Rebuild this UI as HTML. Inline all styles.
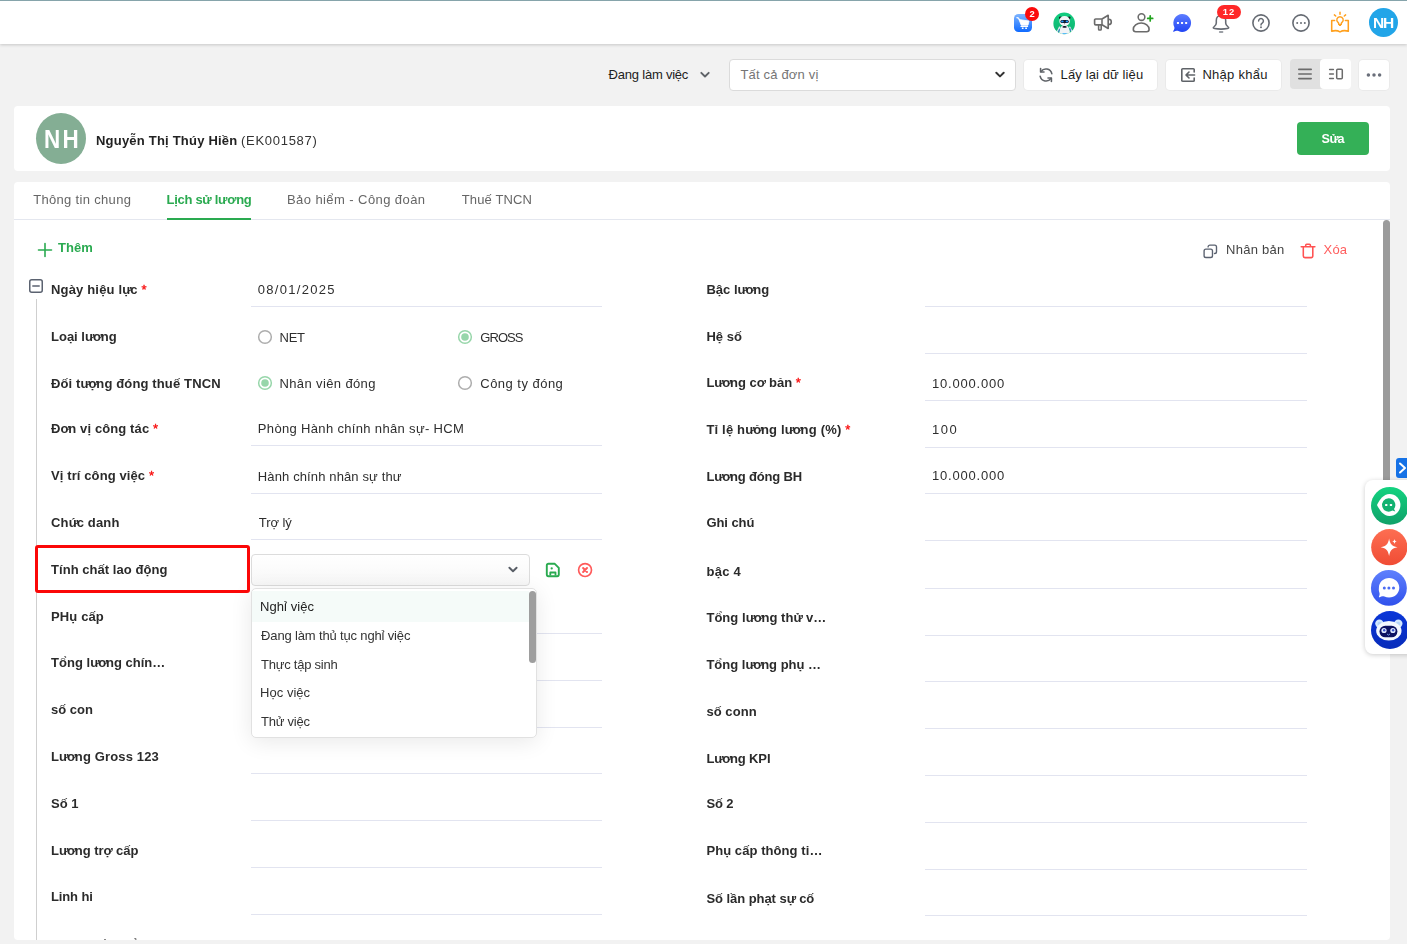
<!DOCTYPE html>
<html lang="vi">
<head>
<meta charset="utf-8">
<title>Hồ sơ nhân viên - Lịch sử lương</title>
<style>
*{box-sizing:border-box;margin:0;padding:0}
html,body{width:1407px;height:944px;overflow:hidden}
body{background:#f2f2f2;font-family:"Liberation Sans",sans-serif;font-size:13px;color:#333;position:relative}
.abs{position:absolute}
.t{position:absolute;white-space:nowrap;line-height:16px;font-size:13px}
.b{font-weight:bold}
.lbl{position:absolute;white-space:nowrap;line-height:16px;font-size:13px;font-weight:bold;color:#2b2b2b}
.val{position:absolute;white-space:nowrap;line-height:16px;font-size:13px;color:#2e2e2e;letter-spacing:.45px}
.ul{position:absolute;height:1px;background:#e2e4f0}
.req{color:#f80f0f;font-weight:normal;-webkit-text-stroke:.35px #f80f0f}
.h{letter-spacing:-1.45px}
.he{letter-spacing:-.5px}
#header{left:0;top:0;width:1407px;height:44px;background:#fff;border-top:1px solid #86a4ab;box-shadow:0 1px 3px rgba(0,0,0,.18)}
.card{position:absolute;background:#fff;border-radius:4px}
.btn{position:absolute;background:#fff;border-radius:4px;height:30.4px;top:59.9px;box-shadow:0 0 0 1px rgba(0,0,0,.03)}
.opt{position:absolute;left:9px;line-height:16px;font-size:13px;color:#333;white-space:nowrap}
svg{position:absolute;overflow:visible}
/* per-text metric fit */
#tb1{letter-spacing:-0.217px!important;margin-left:-0.4px}
#tb2{letter-spacing:0.183px!important;margin-left:-0.6px}
#tb3{letter-spacing:0.114px!important;margin-left:-0.4px}
#tb4{letter-spacing:0.274px!important;margin-left:-0.6px}
#nm{letter-spacing:0.21px!important;margin-left:-1px}
#code{letter-spacing:0.711px!important;margin-left:-1px}
#tab1{letter-spacing:0.321px!important;margin-left:1.2px}
#tab2{letter-spacing:-0.3px!important;margin-left:-0.4px}
#tab3{letter-spacing:0.418px!important;margin-left:0.0px}
#tab4{letter-spacing:0.126px!important;margin-left:0.8px}
#them{letter-spacing:0.067px!important;margin-left:0px}
#nhanban{letter-spacing:0.279px!important;margin-left:-1px}
#xoa{letter-spacing:0.15px!important;margin-left:-0.4px}
#v0{letter-spacing:1.294px!important;margin-left:-1.2px}
#v3{letter-spacing:0.336px!important;margin-left:-1.2px}
#v4{letter-spacing:0.126px!important;margin-left:-1.2px}
#v5{letter-spacing:-0.07px!important;margin-left:-0.2px}
#w2{letter-spacing:0.806px!important;margin-left:0.0px}
#w3{letter-spacing:1.55px!important;margin-left:0.0px}
#w4{letter-spacing:0.806px!important;margin-left:0.0px}
#r1{letter-spacing:-0.25px!important;margin-left:-1.0px}
#r2{letter-spacing:-0.95px!important;margin-left:-0.2px}
#r3{letter-spacing:0.373px!important;margin-left:-1.0px}
#r4{letter-spacing:0.469px!important;margin-left:-0.2px}
#ll0{letter-spacing:0.172px!important;margin-left:0px}
#ll1{letter-spacing:0.0px!important;margin-left:0px}
#ll2{letter-spacing:0.139px!important;margin-left:0px}
#ll3{letter-spacing:0.113px!important;margin-left:0px}
#ll4{letter-spacing:0.106px!important;margin-left:0px}
#ll5{letter-spacing:0.164px!important;margin-left:0px}
#ll6{letter-spacing:0.047px!important;margin-left:0px}
#ll7{letter-spacing:0.133px!important;margin-left:0px}
#ll8{letter-spacing:0.027px!important;margin-left:0px}
#ll10{letter-spacing:0.143px!important;margin-left:0px}
#ll11{letter-spacing:0.0px!important;margin-left:0px}
#ll12{letter-spacing:0.0px!important;margin-left:0px}
#ll13{letter-spacing:-0.133px!important;margin-left:0px}
#rl0{letter-spacing:0.025px!important;margin-left:0.4px}
#rl1{letter-spacing:0.05px!important;margin-left:0.4px}
#rl2{letter-spacing:-0.031px!important;margin-left:0.4px}
#rl3{letter-spacing:0.182px!important;margin-left:0.4px}
#rl4{letter-spacing:-0.15px!important;margin-left:0.4px}
#rl5{letter-spacing:-0.067px!important;margin-left:0.4px}
#rl6{letter-spacing:0.3px!important;margin-left:0.4px}
#rl7{letter-spacing:0.044px!important;margin-left:0.4px}
#rl8{letter-spacing:0.0px!important;margin-left:0.4px}
#rl9{letter-spacing:0.066px!important;margin-left:0.4px}
#rl10{letter-spacing:-0.125px!important;margin-left:0.4px}
#rl11{letter-spacing:-0.134px!important;margin-left:0.4px}
#rl12{letter-spacing:0.075px!important;margin-left:0.4px}
#rl13{letter-spacing:-0.05px!important;margin-left:0.4px}
#o1{letter-spacing:0.05px!important;margin-left:-0.9px}
#o2{letter-spacing:-0.156px!important;margin-left:0.1px}
#o3{letter-spacing:-0.242px!important;margin-left:0.1px}
#o4{letter-spacing:0.014px!important;margin-left:-0.9px}
#o5{letter-spacing:-0.243px!important;margin-left:0.1px}
</style>
</head>
<body>
<div id="root" style="position:absolute;left:0;top:0;width:1407px;height:944px;overflow:hidden">
<!-- HEADER -->
<div id="header" class="abs"></div>

<!-- TOOLBAR -->
<div id="tb1" class="t" style="left:609px;top:66.5px;color:#222">Đang làm việc</div>
<svg style="left:700px;top:71px" width="10" height="8" viewBox="0 0 10 8"><path d="M1.3 1.8 L5 5.5 L8.7 1.8" fill="none" stroke="#5f6368" stroke-width="1.9" stroke-linecap="round" stroke-linejoin="round"/></svg>
<div class="abs" style="left:729px;top:59px;width:287px;height:32px;background:#fff;border:1px solid #dbdbdb;border-radius:4px"></div>
<div id="tb2" class="t" style="left:741px;top:67px;color:#757575;letter-spacing:.55px">Tất cả đơn vị</div>
<svg style="left:995px;top:71px" width="10" height="8" viewBox="0 0 10 8"><path d="M1.3 1.8 L5 5.4 L8.7 1.8" fill="none" stroke="#333" stroke-width="2" stroke-linecap="round" stroke-linejoin="round"/></svg>

<div class="btn" style="left:1024.2px;width:133px"></div>
<div id="tb3" class="t" style="left:1061px;top:66.9px;color:#1c1c1c">Lấy lại dữ liệu</div>
<div class="btn" style="left:1166px;width:114.8px"></div>
<div id="tb4" class="t" style="left:1203px;top:66.9px;color:#1c1c1c">Nhập khẩu</div>
<div class="abs" style="left:1290px;top:59px;width:34px;height:30px;background:#e0e0e0;border-radius:4px 0 0 4px"></div>
<div class="abs" style="left:1320px;top:59px;width:31px;height:30px;background:#fff;border-radius:4px"></div>
<div class="btn" style="left:1359.3px;width:29.4px"></div>

<div id="cards" style="position:absolute;left:0;top:0;width:1407px;height:944px;will-change:transform">
<!-- EMPLOYEE CARD -->
<div class="card" style="left:14px;top:106px;width:1376px;height:65px"></div>
<div class="abs" style="left:36px;top:113px;width:50px;height:51px;border-radius:50%;background:#84ae94"></div>
<div id="avt" class="t b" style="left:44.1px;top:124.5px;font-size:25.5px;line-height:28px;color:#fff;letter-spacing:2.5px;transform:scaleX(.88);transform-origin:0 0">NH</div>
<div id="nm" class="t b" style="left:97px;top:133px;color:#222">Nguyễn Thị Thúy Hiền</div>
<div id="code" class="t" style="left:242px;top:133px;color:#333;letter-spacing:.6px">(EK001587)</div>
<div class="abs" style="left:1297px;top:122px;width:72px;height:33px;background:#34b057;border-radius:4px"></div>
<div id="sua" class="t b" style="left:1321.5px;top:130.5px;color:#fff;letter-spacing:-.3px;font-size:12.6px">S<span style="letter-spacing:-1.3px">ử</span>a</div>

<!-- MAIN CARD -->
<div id="main" class="card" style="left:14px;top:182px;width:1376px;height:758px;overflow:hidden"></div>
<div class="abs" style="left:14px;top:219px;width:1376px;height:1px;background:#e4e7ef"></div>
<div id="tab1" class="t" style="left:32px;top:192px;color:#666;letter-spacing:.45px">Thông tin chung</div>
<div id="tab2" class="t b" style="left:167px;top:192px;color:#2aaa50">Lịch sử lương</div>
<div class="abs" style="left:167px;top:218px;width:84px;height:2px;background:#2aaa50"></div>
<div id="tab3" class="t" style="left:287px;top:192px;color:#666;letter-spacing:.45px">Bảo hiểm - Công đoàn</div>
<div id="tab4" class="t" style="left:461px;top:192px;color:#666;letter-spacing:.45px">Thuế TNCN</div>

<!-- FORM -->
<div id="form" class="abs" style="left:14px;top:220px;width:1376px;height:720px;overflow:hidden;border-radius:0 0 4px 4px">
<div class="abs" style="left:22px;top:79px;width:1px;height:700px;background:#cfcfcf"></div>
<div id="ll0" class="lbl" style="left:37px;top:61.5px">Ngày hiệu l<span class="h">ự</span>c <span class="req">*</span></div>
<div id="ll1" class="lbl" style="left:37px;top:109.3px">Loại l<span class="h">ư</span><span class="h">ơ</span>ng</div>
<div id="ll2" class="lbl" style="left:37px;top:155.7px">Đối t<span class="h">ư</span><span class="h">ợ</span>ng đóng thuế TNCN</div>
<div id="ll3" class="lbl" style="left:37px;top:200.5px">Đ<span class="h">ơ</span>n vị công tác <span class="req">*</span></div>
<div id="ll4" class="lbl" style="left:37px;top:247.6px">Vị trí công việc <span class="req">*</span></div>
<div id="ll5" class="lbl" style="left:37px;top:294.5px">Ch<span class="h">ứ</span>c danh</div>
<div id="ll6" class="lbl" style="left:37px;top:341.5px">Tính chất lao động</div>
<div id="ll7" class="lbl" style="left:37px;top:388.5px">PHụ cấp</div>
<div id="ll8" class="lbl" style="left:37px;top:434.8px">Tổng l<span class="h">ư</span><span class="h">ơ</span>ng chín…</div>
<div id="ll9" class="lbl" style="left:37px;top:481.5px">số con</div>
<div id="ll10" class="lbl" style="left:37px;top:529.1px">L<span class="h">ư</span><span class="h">ơ</span>ng Gross 123</div>
<div id="ll11" class="lbl" style="left:37px;top:575.8px">Số 1</div>
<div id="ll12" class="lbl" style="left:37px;top:622.8px">L<span class="h">ư</span><span class="h">ơ</span>ng tr<span class="he">ợ</span> cấp</div>
<div id="ll13" class="lbl" style="left:37px;top:668.8px">Linh hi</div>
<div id="ll14" class="lbl" style="left:37px;top:716.7px">L<span class="h">ư</span><span class="h">ơ</span>ng tối thiểu</div>
<div id="rl0" class="lbl" style="left:692px;top:61.8px">Bậc l<span class="h">ư</span><span class="h">ơ</span>ng</div>
<div id="rl1" class="lbl" style="left:692px;top:108.5px">Hệ số</div>
<div id="rl2" class="lbl" style="left:692px;top:155.0px">L<span class="h">ư</span><span class="h">ơ</span>ng c<span class="he">ơ</span> bản <span class="req">*</span></div>
<div id="rl3" class="lbl" style="left:692px;top:201.7px">Tỉ lệ h<span class="h">ư</span><span class="h">ở</span>ng l<span class="h">ư</span><span class="h">ơ</span>ng (%) <span class="req">*</span></div>
<div id="rl4" class="lbl" style="left:692px;top:248.7px">L<span class="h">ư</span><span class="h">ơ</span>ng đóng BH</div>
<div id="rl5" class="lbl" style="left:692px;top:295.3px">Ghi chú</div>
<div id="rl6" class="lbl" style="left:692px;top:343.7px">bậc 4</div>
<div id="rl7" class="lbl" style="left:692px;top:389.5px">Tổng l<span class="h">ư</span><span class="h">ơ</span>ng th<span class="he">ử</span> v…</div>
<div id="rl8" class="lbl" style="left:692px;top:436.8px">Tổng l<span class="h">ư</span><span class="h">ơ</span>ng phụ …</div>
<div id="rl9" class="lbl" style="left:692px;top:483.5px">số conn</div>
<div id="rl10" class="lbl" style="left:692px;top:530.5px">L<span class="h">ư</span><span class="h">ơ</span>ng KPI</div>
<div id="rl11" class="lbl" style="left:692px;top:576.4px">Số 2</div>
<div id="rl12" class="lbl" style="left:692px;top:623.1px">Phụ cấp thông ti…</div>
<div id="rl13" class="lbl" style="left:692px;top:670.5px">Số lần phạt s<span class="he">ự</span> cố</div>
<div id="rl14" class="lbl" style="left:692px;top:718.1px">L<span class="h">ư</span><span class="h">ơ</span>ng hiệu suất</div>
<div class="ul" style="left:237px;top:86px;width:351px"></div>
<div class="ul" style="left:237px;top:225px;width:351px"></div>
<div class="ul" style="left:237px;top:273px;width:351px"></div>
<div class="ul" style="left:237px;top:319px;width:351px"></div>
<div class="ul" style="left:237px;top:413px;width:351px"></div>
<div class="ul" style="left:237px;top:460px;width:351px"></div>
<div class="ul" style="left:237px;top:507px;width:351px"></div>
<div class="ul" style="left:237px;top:553px;width:351px"></div>
<div class="ul" style="left:237px;top:600px;width:351px"></div>
<div class="ul" style="left:237px;top:647px;width:351px"></div>
<div class="ul" style="left:237px;top:694px;width:351px"></div>
<div class="ul" style="left:911px;top:86px;width:382px"></div>
<div class="ul" style="left:911px;top:133px;width:382px"></div>
<div class="ul" style="left:911px;top:180px;width:382px"></div>
<div class="ul" style="left:911px;top:227px;width:382px"></div>
<div class="ul" style="left:911px;top:273px;width:382px"></div>
<div class="ul" style="left:911px;top:320px;width:382px"></div>
<div class="ul" style="left:911px;top:368px;width:382px"></div>
<div class="ul" style="left:911px;top:415px;width:382px"></div>
<div class="ul" style="left:911px;top:461px;width:382px"></div>
<div class="ul" style="left:911px;top:508px;width:382px"></div>
<div class="ul" style="left:911px;top:555px;width:382px"></div>
<div class="ul" style="left:911px;top:602px;width:382px"></div>
<div class="ul" style="left:911px;top:649px;width:382px"></div>
<div class="ul" style="left:911px;top:695px;width:382px"></div>
<div id="v0" class="val" style="left:245px;top:61.5px;">08/01/2025</div>
<div id="v3" class="val" style="left:245px;top:200.9px;">Phòng Hành chính nhân sự- HCM</div>
<div id="v4" class="val" style="left:245px;top:249.0px;">Hành chính nhân sự thư</div>
<div id="v5" class="val" style="left:245px;top:295.0px;">Trợ lý</div>
<div id="w2" class="val" style="left:918px;top:155.5px;">10.000.000</div>
<div id="w3" class="val" style="left:918px;top:202.3px;">100</div>
<div id="w4" class="val" style="left:918px;top:248.2px;">10.000.000</div>
<svg style="left:243px;top:108.95px" width="16" height="16" viewBox="0 0 16 16"><circle cx="8" cy="8" r="6.35" fill="#fff" stroke="#adadad" stroke-width="1.5"/></svg>
<div id="r1" class="val" style="left:266.5px;top:109.5px">NET</div>
<svg style="left:443px;top:108.95px" width="16" height="16" viewBox="0 0 16 16"><circle cx="8" cy="8" r="6.35" fill="#fff" stroke="#97d6aa" stroke-width="1.5"/><circle cx="8" cy="8" r="3.8" fill="#97d6aa"/></svg>
<div id="r2" class="val" style="left:466.5px;top:109.5px">GROSS</div>
<svg style="left:243px;top:155.35px" width="16" height="16" viewBox="0 0 16 16"><circle cx="8" cy="8" r="6.35" fill="#fff" stroke="#97d6aa" stroke-width="1.5"/><circle cx="8" cy="8" r="3.8" fill="#97d6aa"/></svg>
<div id="r3" class="val" style="left:266.5px;top:155.9px">Nhân viên đóng</div>
<svg style="left:443px;top:155.35px" width="16" height="16" viewBox="0 0 16 16"><circle cx="8" cy="8" r="6.35" fill="#fff" stroke="#adadad" stroke-width="1.5"/></svg>
<div id="r4" class="val" style="left:466.5px;top:155.9px">Công ty đóng</div>
</div>
<!-- ACTIONS ROW -->
<svg style="left:37px;top:242px" width="16" height="16" viewBox="0 0 16 16"><path d="M8 1.5v13M1.5 8h13" fill="none" stroke="#2aaa50" stroke-width="1.6" stroke-linecap="round"/></svg>
<div id="them" class="t b" style="left:58px;top:239.5px;color:#2aaa50">Thêm</div>
<svg style="left:29px;top:279px" width="14" height="14" viewBox="0 0 14 14"><rect x=".75" y=".75" width="12.5" height="12.5" rx="2" fill="#fff" stroke="#5b6270" stroke-width="1.5"/><path d="M3.8 7h6.4" stroke="#5b6270" stroke-width="1.5" stroke-linecap="round"/></svg>
<svg style="left:1202.6px;top:243.6px" width="14.6" height="14.6" viewBox="0 0 16 16"><rect x="1.2" y="5.6" width="9.2" height="9.2" rx="2" fill="none" stroke="#5b6270" stroke-width="1.5"/><path d="M5.6 3.2V3.2a2 2 0 0 1 2-2H12.8a2 2 0 0 1 2 2V8.4a2 2 0 0 1-2 2H12.6" fill="none" stroke="#5b6270" stroke-width="1.5" stroke-linecap="round"/></svg>
<div id="nhanban" class="t" style="left:1227px;top:241.5px;color:#444;letter-spacing:.45px">Nhân bản</div>
<svg style="left:1300px;top:243px" width="16" height="16" viewBox="0 0 16 16"><path d="M1.200 3.800H14.900M5.700 3.600V2.300a1 1 0 0 1 1-1h2.700a1 1 0 0 1 1 1v1.300M3.300 4.200v8.800a1.600 1.600 0 0 0 1.600 1.600h6.300a1.600 1.600 0 0 0 1.600-1.600V4.200" fill="none" stroke="#ff5252" stroke-width="1.550" stroke-linecap="round" stroke-linejoin="round"/></svg>
<div id="xoa" class="t" style="left:1324px;top:241.5px;color:#ff5e5e;letter-spacing:.45px">Xóa</div>

<!-- INLINE SELECT EDITOR -->
<div class="abs" style="left:251px;top:554px;width:279px;height:32px;border:1px solid #dcdcdc;border-radius:4px;background:linear-gradient(#fff,#f7f7f7)"></div>
<svg style="left:508px;top:566px" width="10" height="8" viewBox="0 0 10 8"><path d="M1.400 1.700 L5 5.200 L8.600 1.700" fill="none" stroke="#585d66" stroke-width="1.900" stroke-linecap="round" stroke-linejoin="round"/></svg>
<svg style="left:545px;top:562px" width="16" height="16" viewBox="0 0 16 16"><path d="M3.400 1.800h6.400l4 4v6.800a1.600 1.600 0 0 1-1.600 1.600H3.400a1.600 1.600 0 0 1-1.600-1.600V3.400a1.600 1.600 0 0 1 1.600-1.600z" fill="none" stroke="#2aaa50" stroke-width="1.900" stroke-linejoin="round"/><path d="M5.300 13.600v-3.100h5.200v3.100" fill="none" stroke="#2aaa50" stroke-width="1.800" stroke-linejoin="round"/><circle cx="6.700" cy="6.400" r="1.150" fill="#2aaa50"/></svg>
<svg style="left:577px;top:562px" width="16" height="16" viewBox="0 0 16 16"><circle cx="8.050" cy="8" r="6.450" fill="none" stroke="#ff5a5a" stroke-width="1.650"/><path d="M6.100 6.050l3.900 3.900M10 6.050l-3.900 3.900" stroke="#ff5a5a" stroke-width="2" stroke-linecap="round"/></svg>

<!-- DROPDOWN LIST -->
<div class="abs" style="left:251px;top:588px;width:286px;height:150px;background:#fff;border:1px solid #e1e1e1;border-radius:5px;box-shadow:0 4px 22px rgba(0,0,0,.09)">
  <div class="abs" style="left:0;top:2px;width:277px;height:31px;background:#f5fbf9"></div>
  <div id="o1" class="opt" style="top:9.8px;color:#222">Nghỉ việc</div>
  <div id="o2" class="opt" style="top:38.8px">Đang làm thủ tục nghỉ việc</div>
  <div id="o3" class="opt" style="top:67.6px">Thực tập sinh</div>
  <div id="o4" class="opt" style="top:95.8px">Học việc</div>
  <div id="o5" class="opt" style="top:124.5px">Thử việc</div>
  <div class="abs" style="left:277px;top:2px;width:7px;height:72px;border-radius:4px;background:#9e9e9e"></div>
</div>

<!-- RED HIGHLIGHT -->
<div class="abs" style="left:35px;top:545px;width:215px;height:48px;border:3px solid #fb0707;border-radius:3px"></div>

<!-- PAGE SCROLLBAR -->
<div class="abs" style="left:1383px;top:220px;width:7px;height:300px;border-radius:4px 4px 0 0;background:#9b9b9b"></div>

<!-- FLOATING SIDE PANEL -->
<div class="abs" style="left:1396px;top:458px;width:14px;height:20px;background:#1672e6;border-radius:3px 0 0 3px"></div>
<svg style="left:1398px;top:462px" width="10" height="12" viewBox="0 0 10 12"><path d="M2 1.5l5 4.5-5 4.5" fill="none" stroke="#fff" stroke-width="2" stroke-linecap="round" stroke-linejoin="round"/></svg>
<div class="abs" style="left:1364.5px;top:480px;width:60px;height:173.600px;background:#fff;border-radius:8px;box-shadow:0 1px 5px rgba(0,0,0,.2)"></div>
</div><!-- /cards -->
<!-- TOOLBAR ICONS -->
<svg style="left:1038px;top:67px" width="16" height="16" viewBox="0 0 16 16"><path d="M13.8 6.6A6 6 0 0 0 3 4.6M2.2 9.4A6 6 0 0 0 13 11.4" fill="none" stroke="#5f6368" stroke-width="1.600" stroke-linecap="round"/><path d="M2.6 1.6v3.4H6M13.4 14.4V11H10" fill="none" stroke="#5f6368" stroke-width="1.600" stroke-linecap="round" stroke-linejoin="round"/></svg>
<svg style="left:1180px;top:66.800px" width="16" height="16" viewBox="0 0 16 16"><path d="M14.200 5V2.600a.9.900 0 0 0-.9-.9H2.700a.9.900 0 0 0-.9.900v10.800a.9.900 0 0 0 .9.900h10.600a.9.900 0 0 0 .9-.9V11" fill="none" stroke="#5f6368" stroke-width="1.600" stroke-linecap="round"/><path d="M14.600 8H6.200M9 5L6 8l3 3" fill="none" stroke="#5f6368" stroke-width="1.600" stroke-linecap="round" stroke-linejoin="round"/></svg>
<svg style="left:1290px;top:59px" width="100" height="32" viewBox="1290 59 100 32"><path d="M1298.800 69.400h12.400M1298.800 74h12.400M1298.800 78.600h12.400" stroke="#6b6b6b" stroke-width="1.600" stroke-linecap="round"/><path d="M1329.600 69.400h3.800M1329.600 74h3.800M1329.600 78.600h3.800" stroke="#6b6b6b" stroke-width="1.500" stroke-linecap="round"/><rect x="1336.700" y="69.200" width="5.600" height="9.500" rx="1" fill="none" stroke="#6b6b6b" stroke-width="1.500"/><circle cx="1368.400" cy="74.900" r="1.750" fill="#6a6f7a"/><circle cx="1374" cy="74.900" r="1.750" fill="#6a6f7a"/><circle cx="1379.600" cy="74.900" r="1.750" fill="#6a6f7a"/></svg>

<!-- HEADER ICONS -->
<!-- cart -->
<div class="abs" style="left:1014px;top:14px;width:18px;height:18px;border-radius:4.5px;background:linear-gradient(#7db4ff,#0f6aff)"></div>
<svg style="left:1014px;top:14px" width="18" height="18" viewBox="0 0 18 18"><path d="M2.900 3.700l1.700.5.800 1.600" fill="none" stroke="#fff" stroke-width="1.200" stroke-linecap="round" stroke-linejoin="round"/><path d="M5 5.500l10 1.500-1 4.200H7.200z" fill="#fff" stroke="#fff" stroke-width=".8" stroke-linejoin="round"/><path d="M7 12.400h6.600" stroke="#fff" stroke-width="1.100" stroke-linecap="round"/><rect x="7.800" y="13.500" width="1.800" height="1.400" rx=".3" fill="#fff"/><rect x="11.200" y="13.500" width="1.800" height="1.400" rx=".3" fill="#fff"/></svg>
<div class="abs" style="left:1025px;top:7px;width:14.4px;height:14.4px;border-radius:50%;background:#fb0a0a"></div>
<div id="bd1" class="t b" style="left:1029.600px;top:8.300px;font-size:9.400px;line-height:11px;color:#fff">2</div>
<!-- robot avatar -->
<svg style="left:1050px;top:10px" width="28" height="28" viewBox="1050 10 28 28"><defs><linearGradient id="grb" x1="0" y1="0" x2="0" y2="1"><stop offset="0" stop-color="#12cd7f"/><stop offset="1" stop-color="#0eb271"/></linearGradient><clipPath id="crb"><circle cx="1064.200" cy="23.400" r="10.800"/></clipPath></defs><circle cx="1064.200" cy="23.400" r="10.800" fill="url(#grb)"/><g clip-path="url(#crb)"><circle cx="1060.300" cy="17.800" r="1.350" fill="#16181d"/><circle cx="1069.200" cy="17.800" r="1.350" fill="#16181d"/><ellipse cx="1064.600" cy="21" rx="5.300" ry="4.900" fill="#f3f4f6"/><rect x="1060.400" y="19.900" width="8.400" height="3" rx="1.500" fill="#121a2b"/><ellipse cx="1062.400" cy="21.400" rx="1.250" ry=".85" fill="#1e9bff"/><ellipse cx="1066.900" cy="21.400" rx="1.250" ry=".85" fill="#1e9bff"/><path d="M1064.100 22.900h1l-.2 1.500h-.6z" fill="#8a8f98"/><path d="M1059.200 34.500c0-5.600 1.800-9.400 5.400-9.400s5.400 3.800 5.400 9.400z" fill="#f1f3f6"/><path d="M1062.400 26.700c.5-.9 3.700-.9 4.400 0 .2.600-.8 1-2.200 1s-2.400-.4-2.200-1z" fill="#0d1424"/><path d="M1059.600 27.200l-2.100 4.300M1069.800 27.200l2 4.300" stroke="#dfe7ef" stroke-width="1.500" stroke-linecap="round"/><path d="M1059.400 29.500l-.8 2.300M1069.900 28.400l.7 2.200" stroke="#2f7fc4" stroke-width="1.100" stroke-linecap="round"/><path d="M1062.800 33.600h3.600" stroke="#49b5f5" stroke-width="1" stroke-linecap="round"/></g></svg>
<!-- megaphone -->
<svg style="left:1090px;top:10px" width="30" height="26" viewBox="1090 10 30 26"><path d="M1095.700 19h6.300l6.200-3.700v13.200l-6.200-3.700h-6.300a1.100 1.100 0 0 1-1.100-1.100v-3.600a1.100 1.100 0 0 1 1.100-1.100z" fill="none" stroke="#6b6b6b" stroke-width="1.650" stroke-linejoin="round"/><path d="M1098.600 25v4.300a.8.800 0 0 0 .8.800h1a.8.800 0 0 0 .8-.8V25M1102 19.200v5.400" fill="none" stroke="#6b6b6b" stroke-width="1.550" stroke-linejoin="round"/><path d="M1108.700 19.300c1.500 0 2.600 1.100 2.600 2.600s-1.100 2.600-2.600 2.600" fill="none" stroke="#6b6b6b" stroke-width="1.600" stroke-linecap="round"/></svg>
<!-- user plus -->
<svg style="left:1128px;top:10px" width="30" height="26" viewBox="1128 10 30 26"><circle cx="1141.500" cy="17.050" r="3.350" fill="none" stroke="#6b6b6b" stroke-width="1.550"/><path d="M1133.300 29.300c0-3.600 3.600-6.300 7.900-6.300s7.900 2.700 7.900 6.300c0 1.600-1.100 2.500-2.500 2.500h-10.800c-1.400 0-2.500-.9-2.500-2.500z" fill="none" stroke="#6b6b6b" stroke-width="1.600"/><path d="M1150.200 15.900v5M1147.700 18.400h5" stroke="#22a31f" stroke-width="1.700" stroke-linecap="round"/></svg>
<!-- chat bubble -->
<svg style="left:1172px;top:13px" width="20" height="20" viewBox="0 0 20 20"><defs><linearGradient id="gcb" x1="0" y1="0" x2="0" y2="1"><stop offset="0" stop-color="#5d7dff"/><stop offset="1" stop-color="#2145f4"/></linearGradient></defs><path d="M10.100 1a8.950 8.950 0 1 1-3.700 17.100c-1.400-.5-2.900-.4-4.100.5-.9.600-1.500-.2-.9-.9 1-1.200 1.300-2.500.8-3.900A8.950 8.950 0 0 1 10.100 1z" fill="url(#gcb)"/><rect x="4.900" y="8.900" width="2.100" height="2.100" rx=".4" fill="#fff"/><rect x="9" y="8.900" width="2.100" height="2.100" rx=".4" fill="#fff"/><rect x="13.100" y="8.900" width="2.100" height="2.100" rx=".4" fill="#fff"/></svg>
<!-- bell -->
<svg style="left:1208px;top:10px" width="26" height="26" viewBox="1208 10 26 26"><path d="M1221 15.500C1218.200 15.500 1216.300 17.600 1216.300 20.400V23C1216.300 24.500 1215.600 25.500 1214.300 26.500C1212.800 27.600 1213 28.300 1214.600 28.600C1216.600 28.950 1218.800 29.100 1221 29.100C1223.200 29.100 1225.400 28.950 1227.400 28.600C1229 28.300 1229.200 27.600 1227.700 26.500C1226.400 25.500 1225.700 24.500 1225.700 23V20.400C1225.700 17.600 1223.800 15.500 1221 15.500Z" fill="none" stroke="#666b73" stroke-width="1.550" stroke-linejoin="round"/><path d="M1219.700 32h2.900" stroke="#7a7f87" stroke-width="1.600" stroke-linecap="round"/></svg>
<div class="abs" style="left:1217px;top:5px;width:24.200px;height:14px;border-radius:7px;background:#ff2828"></div>
<div id="bd2" class="t b" style="left:1222.800px;top:6px;font-size:9.400px;line-height:11px;color:#fff;letter-spacing:.9px">12</div>
<!-- help -->
<svg style="left:1251px;top:13px" width="20" height="20" viewBox="0 0 20 20"><circle cx="10" cy="10" r="8.100" fill="none" stroke="#666b73" stroke-width="1.600"/><path d="M7.600 8a2.400 2.400 0 1 1 3.600 2.100c-.8.500-1.200.9-1.200 1.800" fill="none" stroke="#666b73" stroke-width="1.500" stroke-linecap="round"/><circle cx="10" cy="14.300" r=".95" fill="#666b73"/></svg>
<!-- more circle -->
<svg style="left:1291px;top:13px" width="20" height="20" viewBox="0 0 20 20"><circle cx="10" cy="10" r="8.100" fill="none" stroke="#666b73" stroke-width="1.600"/><circle cx="6.200" cy="10" r="1" fill="#666b73"/><circle cx="10" cy="10" r="1" fill="#666b73"/><circle cx="13.800" cy="10" r="1" fill="#666b73"/></svg>
<!-- bulb book -->
<svg style="left:1328px;top:10px" width="24" height="26" viewBox="1328 10 24 26"><path d="M1340 12.300v1.900M1334.400 14.900l1.300 1.100M1345.600 14.900l-1.300 1.100" stroke="#ffa01e" stroke-width="1.500" stroke-linecap="round"/><path d="M1340 16.700a3.200 3.200 0 0 0-2 5.700c.5.400.7.900.7 1.400v.6h2.600v-.6c0-.5.200-1 .7-1.400a3.200 3.200 0 0 0-2-5.700z" fill="none" stroke="#ffa01e" stroke-width="1.400" stroke-linejoin="round"/><rect x="1338.900" y="24" width="2.200" height="2.100" rx=".5" fill="#ffa01e"/><path d="M1334.600 20.400h-2.900v10.900c2.900-1 5.800-.9 8.300.6 2.500-1.500 5.400-1.600 8.300-.6V20.400h-2.900" fill="none" stroke="#ffa01e" stroke-width="1.550" stroke-linejoin="round" stroke-linecap="round"/></svg>
<!-- NH avatar -->
<div class="abs" style="left:1369px;top:8px;width:29px;height:29px;border-radius:50%;background:#22a5e8"></div>
<div id="nh2" class="t b" style="left:1373px;top:13.900px;font-size:15.500px;line-height:17px;color:#fff;letter-spacing:-1.300px">NH</div>
<!-- FLOATING ICONS -->
<svg style="left:1360px;top:480px" width="47" height="176" viewBox="1360 480 47 176"><defs>
<linearGradient id="fg1" x1="0" y1="0" x2="0" y2="1"><stop offset="0" stop-color="#13d380"/><stop offset="1" stop-color="#10a169"/></linearGradient>
<linearGradient id="fg2" x1="0" y1="0" x2="0" y2="1"><stop offset="0" stop-color="#fd6e52"/><stop offset="1" stop-color="#f04c34"/></linearGradient>
<linearGradient id="fg3" x1="0" y1="0" x2="0" y2="1"><stop offset="0" stop-color="#5f80fd"/><stop offset="1" stop-color="#3051ec"/></linearGradient>
<linearGradient id="fg4" x1="0" y1="0" x2="0" y2="1"><stop offset="0" stop-color="#0b37d8"/><stop offset="1" stop-color="#082cba"/></linearGradient></defs>
<circle cx="1389.950" cy="505.850" r="18.950" fill="url(#fg1)"/>
<path d="M1377 505c2.600-5 6.300-10.900 12.500-10.900a10.950 10.950 0 0 1 0 21.900c-6.200 0-9.900-6-12.500-11z" fill="#fff"/>
<path d="M1388.600 498.300a6.700 6.700 0 0 1 5.400 10.700l1.300 2.500-2.900-.9a6.700 6.700 0 1 1-3.800-12.300z" fill="#12b271"/>
<rect x="1385.100" y="503.900" width="2.300" height="2.200" rx=".5" fill="#fff"/><rect x="1389.800" y="503.900" width="2.300" height="2.200" rx=".5" fill="#fff"/>
<circle cx="1389.300" cy="547.200" r="18.100" fill="url(#fg2)"/>
<path d="M1389.100 538.400c1 5.700 2.700 7.700 8.400 8.800-5.700 1.100-7.400 3.100-8.400 8.900-1-5.800-2.700-7.800-8.400-8.900 5.700-1.100 7.400-3.100 8.400-8.800z" fill="#fff"/>
<path d="M1394.500 539c.3 1.600.8 2.200 2.400 2.500-1.600.3-2.100.9-2.400 2.500-.3-1.600-.8-2.200-2.400-2.500 1.600-.3 2.100-.9 2.400-2.500z" fill="#fff"/>
<circle cx="1388.900" cy="587.900" r="17.950" fill="url(#fg3)"/>
<path d="M1389.100 578c5.700 0 10.200 4.300 10.200 9.800s-4.500 9.800-10.200 9.800c-1.700 0-3.300-.4-4.700-1-1.600-.6-3.300-.3-4.600.6-.6.400-1.100-.1-.8-.7.800-1.500.8-2.900.2-4.400a9.300 9.300 0 0 1-.3-4.300c0-5.500 4.500-9.800 10.200-9.800z" fill="#fff"/>
<circle cx="1384.300" cy="587.900" r="1.500" fill="#4a6bf3"/><circle cx="1388.900" cy="587.900" r="1.500" fill="#4a6bf3"/><circle cx="1393.500" cy="587.900" r="1.500" fill="#4a6bf3"/>
<circle cx="1389.950" cy="629.950" r="18.950" fill="url(#fg4)"/>
<circle cx="1379.400" cy="623.600" r="4.200" fill="#d3e8ff"/><circle cx="1398.300" cy="623.600" r="4.200" fill="#d3e8ff"/>
<circle cx="1379.600" cy="623.900" r="2.200" fill="#b4d4f8"/><circle cx="1398.100" cy="623.900" r="2.200" fill="#b4d4f8"/>
<ellipse cx="1388.850" cy="630.800" rx="12.700" ry="9.700" fill="#f3f8ff"/>
<rect x="1379.500" y="625.800" width="17.900" height="11.500" rx="5.700" fill="#0c1262"/>
<circle cx="1384" cy="630.500" r="2.600" fill="#dfeaff"/><circle cx="1392.900" cy="630.500" r="2.600" fill="#dfeaff"/>
<circle cx="1384.200" cy="630.300" r="1.200" fill="#3a55c9"/><circle cx="1393.100" cy="630.300" r="1.200" fill="#3a55c9"/>
<path d="M1387.300 634.200l1.200.9 1.200-.9" fill="none" stroke="#8db9ff" stroke-width=".8" stroke-linecap="round"/>
</svg>

</div>
</body>
</html>
